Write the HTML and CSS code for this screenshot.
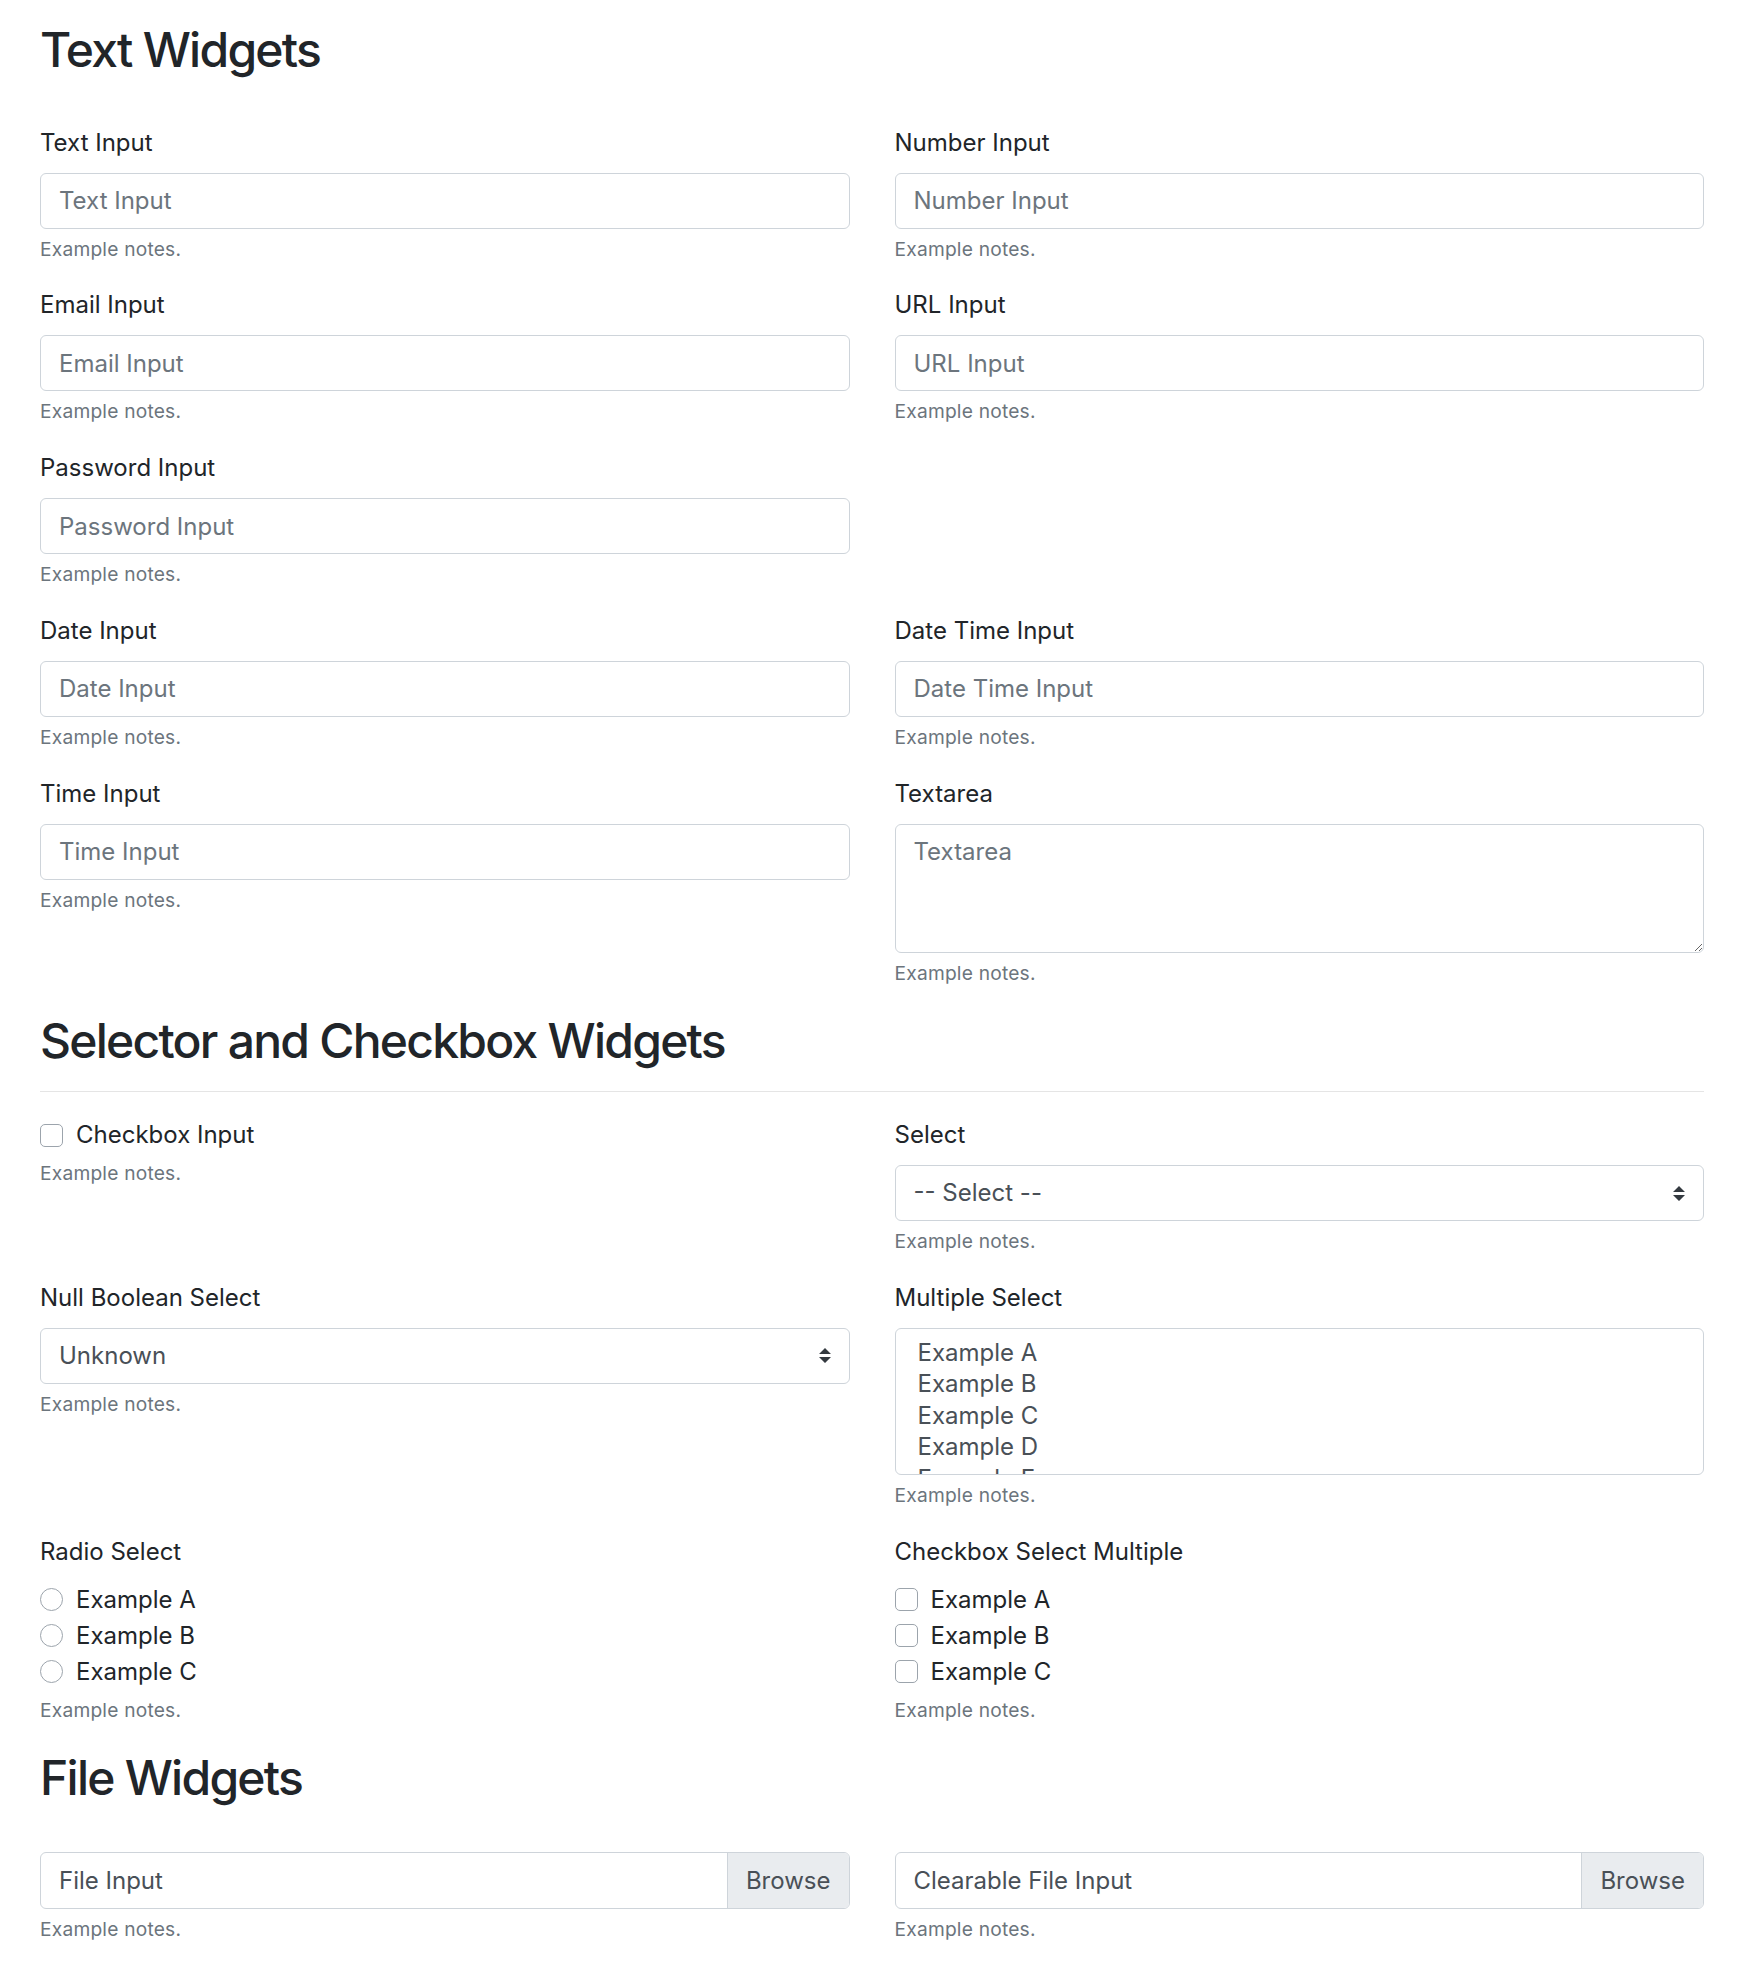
FILE: index.html
```html
<!DOCTYPE html>
<html lang="en">
<head>
<meta charset="utf-8">
<title>Widgets</title>
<link rel="stylesheet" href="styles.css">
</head>
<body>
<main class="page">
  <section class="section">
    <h2 class="section-title">Text Widgets</h2>
    <div class="grid">
      <div class="field">
        <label class="field-label">Text Input</label>
        <input class="control" type="text" placeholder="Text Input">
        <small class="note">Example notes.</small>
      </div>
      <div class="field">
        <label class="field-label">Number Input</label>
        <input class="control" type="text" placeholder="Number Input">
        <small class="note">Example notes.</small>
      </div>
      <div class="field">
        <label class="field-label">Email Input</label>
        <input class="control" type="text" placeholder="Email Input">
        <small class="note">Example notes.</small>
      </div>
      <div class="field">
        <label class="field-label">URL Input</label>
        <input class="control" type="text" placeholder="URL Input">
        <small class="note">Example notes.</small>
      </div>
      <div class="field">
        <label class="field-label">Password Input</label>
        <input class="control" type="password" placeholder="Password Input">
        <small class="note">Example notes.</small>
      </div>
      <div class="field field-empty"></div>
      <div class="field">
        <label class="field-label">Date Input</label>
        <input class="control" type="text" placeholder="Date Input">
        <small class="note">Example notes.</small>
      </div>
      <div class="field">
        <label class="field-label">Date Time Input</label>
        <input class="control" type="text" placeholder="Date Time Input">
        <small class="note">Example notes.</small>
      </div>
      <div class="field">
        <label class="field-label">Time Input</label>
        <input class="control" type="text" placeholder="Time Input">
        <small class="note">Example notes.</small>
      </div>
      <div class="field">
        <label class="field-label">Textarea</label>
        <textarea class="control control-area" rows="3" placeholder="Textarea"></textarea>
        <small class="note">Example notes.</small>
      </div>
    </div>
  </section>

  <section class="section">
    <h2 class="section-title section-title-ruled">Selector and Checkbox Widgets</h2>
    <div class="grid">
      <div class="field">
        <div class="choice">
          <span class="box"></span><span class="choice-text">Checkbox Input</span>
        </div>
        <small class="note">Example notes.</small>
      </div>
      <div class="field">
        <label class="field-label">Select</label>
        <div class="control select">
          <span>-- Select --</span>
          <svg class="select-arrows" viewBox="0 0 4 5" width="12" height="15" aria-hidden="true"><path d="M2 0L0 2h4zm0 5L0 3h4z" fill="#343a40"/></svg>
        </div>
        <small class="note">Example notes.</small>
      </div>
      <div class="field">
        <label class="field-label">Null Boolean Select</label>
        <div class="control select">
          <span>Unknown</span>
          <svg class="select-arrows" viewBox="0 0 4 5" width="12" height="15" aria-hidden="true"><path d="M2 0L0 2h4zm0 5L0 3h4z" fill="#343a40"/></svg>
        </div>
        <small class="note">Example notes.</small>
      </div>
      <div class="field">
        <label class="field-label">Multiple Select</label>
        <div class="listbox">
          <div class="listbox-item">Example A</div>
          <div class="listbox-item">Example B</div>
          <div class="listbox-item">Example C</div>
          <div class="listbox-item">Example D</div>
          <div class="listbox-item">Example E</div>
        </div>
        <small class="note">Example notes.</small>
      </div>
      <div class="field">
        <label class="field-label">Radio Select</label>
        <div class="choice"><span class="box box-round"></span><span class="choice-text">Example A</span></div>
        <div class="choice"><span class="box box-round"></span><span class="choice-text">Example B</span></div>
        <div class="choice"><span class="box box-round"></span><span class="choice-text">Example C</span></div>
        <small class="note">Example notes.</small>
      </div>
      <div class="field">
        <label class="field-label">Checkbox Select Multiple</label>
        <div class="choice"><span class="box"></span><span class="choice-text">Example A</span></div>
        <div class="choice"><span class="box"></span><span class="choice-text">Example B</span></div>
        <div class="choice"><span class="box"></span><span class="choice-text">Example C</span></div>
        <small class="note">Example notes.</small>
      </div>
    </div>
  </section>

  <section class="section">
    <h2 class="section-title">File Widgets</h2>
    <div class="grid">
      <div class="field">
        <div class="file">
          <span class="file-name">File Input</span>
          <span class="file-btn">Browse</span>
        </div>
        <small class="note">Example notes.</small>
      </div>
      <div class="field">
        <div class="file">
          <span class="file-name">Clearable File Input</span>
          <span class="file-btn">Browse</span>
        </div>
        <small class="note">Example notes.</small>
      </div>
    </div>
  </section>
</main>
</body>
</html>
```

FILE: styles.css
```css
* {
  box-sizing: border-box;
}

html,
body {
  margin: 0;
  background: #fff;
}

body {
  font-family: Inter, "Noto Sans", "Liberation Sans", sans-serif;
  font-size: 24px;
  line-height: 36px;
  color: #212529;
}

.page {
  padding: 21px 40px 0;
}

.section-title {
  margin: 0 0 24px;
  padding-bottom: 22px;
  font-size: 48px;
  font-weight: 500;
  line-height: 57.6px;
  letter-spacing: -1.75px;
  color: #212529;
}

.section-title-ruled {
  margin-bottom: 25px;
  border-bottom: 1px solid rgba(0, 0, 0, 0.1);
}

.grid {
  display: grid;
  grid-template-columns: 1fr 1fr;
  column-gap: 45px;
}

.field {
  margin-bottom: 24px;
}

.field-label {
  display: block;
  margin-bottom: 12px;
}

.control {
  display: block;
  width: 100%;
  height: 56px;
  margin: 0;
  padding: 9px 18px;
  font: inherit;
  line-height: 36px;
  color: #495057;
  background: #fff;
  border: 1px solid #ced4da;
  border-radius: 6px;
  outline: none;
}

.control::placeholder {
  color: #6c757d;
  opacity: 1;
}

.control-area {
  height: 129px;
  resize: vertical;
}

.note {
  display: block;
  margin-top: 6px;
  font-size: 19.2px;
  line-height: 28.8px;
  letter-spacing: 0.2px;
  color: #6c757d;
}

.select {
  display: flex;
  align-items: center;
  justify-content: space-between;
  padding: 0 18px;
}

.select-arrows {
  flex: none;
}

.listbox {
  height: 147px;
  padding: 8px 18px 0;
  overflow: hidden;
  color: #495057;
  border: 1px solid #ced4da;
  border-radius: 6px;
}

.listbox-item {
  height: 31.5px;
  padding: 0 4px;
  line-height: 31.5px;
}

.choice {
  display: flex;
  align-items: center;
  height: 36px;
}

.box {
  flex: none;
  width: 23px;
  height: 23px;
  margin-right: 13px;
  background: #fff;
  border: 1px solid #9ca4ac;
  border-radius: 5px;
}

.box-round {
  border-radius: 50%;
}

.file {
  display: flex;
  height: 57px;
  overflow: hidden;
  color: #495057;
  border: 1px solid #ced4da;
  border-radius: 6px;
}

.file-name {
  flex: 1;
  display: flex;
  align-items: center;
  padding: 0 18px;
}

.file-btn {
  display: flex;
  align-items: center;
  padding: 0 18px;
  background: #e9ecef;
  border-left: 1px solid #ced4da;
}
```
